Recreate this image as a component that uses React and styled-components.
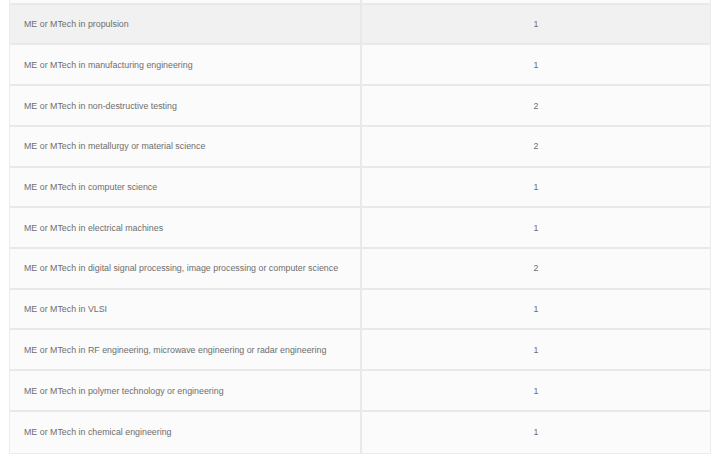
import React from 'react';
import styled, { createGlobalStyle } from 'styled-components';

const GlobalStyle = createGlobalStyle`
  html, body {
    margin: 0;
    padding: 0;
    background: #ffffff;
  }
  body {
    font-family: "Liberation Sans", Arial, sans-serif;
  }
`;

const rows = [
  ['ME or MTech in propulsion', 1],
  ['ME or MTech in manufacturing engineering', 1],
  ['ME or MTech in non-destructive testing', 2],
  ['ME or MTech in metallurgy or material science', 2],
  ['ME or MTech in computer science', 1],
  ['ME or MTech in electrical machines', 1],
  ['ME or MTech in digital signal processing, image processing or computer science', 2],
  ['ME or MTech in VLSI', 1],
  ['ME or MTech in RF engineering, microwave engineering or radar engineering', 1],
  ['ME or MTech in polymer technology or engineering', 1],
  ['ME or MTech in chemical engineering', 1],
];

const Page = styled.div`
  padding: 0 9px;
  width: 702px;
`;

const Table = styled.div`
  border-left: 1px solid #ececec;
  border-right: 1px solid #ececec;
  border-bottom: 1px solid #ececec;
  margin-top: -36px;
`;

const Row = styled.div`
  display: grid;
  grid-template-columns: 350px 1fr;
  height: 40.73px;
  box-sizing: border-box;
  border-bottom: 2px solid #e9e9e9;
  background: ${p => (p.$active ? '#f1f1f1' : '#fbfbfb')};

  &:last-child {
    border-bottom: none;
  }
`;

const Cell = styled.div`
  display: flex;
  align-items: center;
  font-size: 8.85px;
  color: #6e6e6e;
  white-space: nowrap;
  padding: 0 0 0 14px;
`;

const CountCell = styled(Cell)`
  justify-content: center;
  padding: 0;
  border-left: 2px solid #e9e9e9;
`;

export default function App() {
  return (
    <>
      <GlobalStyle />
      <Page>
        <Table>
          <Row>
            <Cell />
            <CountCell />
          </Row>
          {rows.map(([name, count], i) => (
            <Row key={name} $active={i === 0}>
              <Cell>{name}</Cell>
              <CountCell>{count}</CountCell>
            </Row>
          ))}
        </Table>
      </Page>
    </>
  );
}
